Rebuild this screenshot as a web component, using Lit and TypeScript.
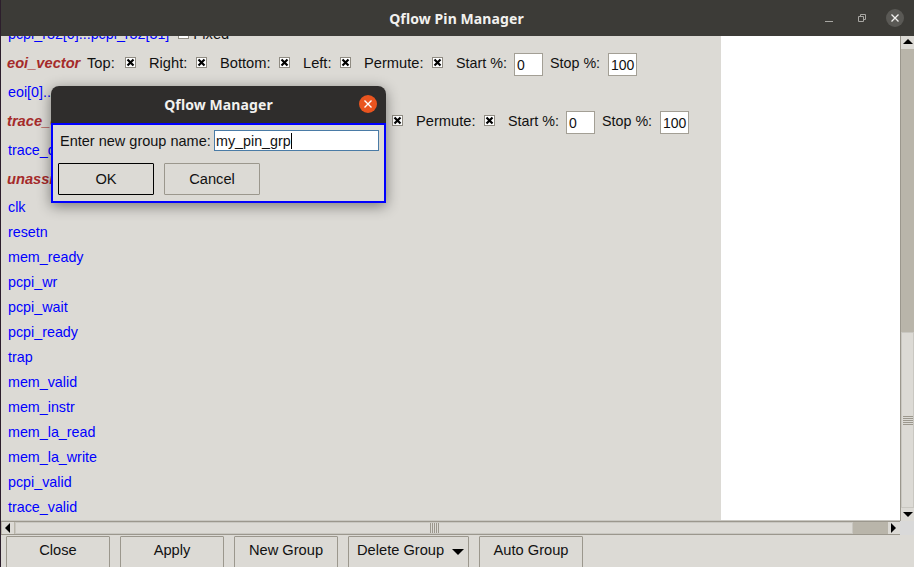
import { LitElement, css, html } from "lit";
import { customElement } from "lit/decorators.js";

const pins = [
  "clk", "resetn", "mem_ready", "pcpi_wr", "pcpi_wait", "pcpi_ready", "trap",
  "mem_valid", "mem_instr", "mem_la_read", "mem_la_write", "pcpi_valid", "trace_valid",
];

// label cell widths, the checkbox always follows directly
const sides: [string, number][] = [
  ["Top:", 38],
  ["Right:", 47],
  ["Bottom:", 59],
  ["Left:", 37],
  ["Permute:", 68],
];

@customElement("app-root")
export class AppRoot extends LitElement {
  static styles = css`
    :host {
      display: block;
      position: relative;
      width: 914px;
      height: 567px;
      overflow: hidden;
      background: #dcdad5;
      font-family: "Liberation Sans", Arial, sans-serif;
      font-size: 14.67px;
      color: #111;
    }
    .window {
      display: flex;
      flex-direction: column;
      height: 567px;
      border-left: 1px solid #2c1e2c;
      box-sizing: border-box;
    }
    .titlebar {
      flex: 0 0 36px;
      display: flex;
      align-items: center;
      justify-content: center;
      position: relative;
      background: #3c3b37;
      color: #f2f1ef;
      font-family: "Noto Sans", sans-serif;
      font-weight: 700;
      font-size: 14px;
      letter-spacing: 0.1px;
      padding-right: 2px;
    }
    .controls {
      position: absolute;
      right: 1px;
      top: 0;
      height: 35px;
      display: flex;
      align-items: center;
    }
    .ctl {
      width: 33px;
      height: 18px;
      display: flex;
      align-items: center;
      justify-content: center;
    }
    .ctl.close {
      width: 18px;
      border-radius: 50%;
      background: #5a5955;
      margin: 0 9px 0 8px;
    }
    .body {
      flex: none;
      display: grid;
      grid-template-columns: 1fr 14px;
      grid-template-rows: 485px 14px;
    }
    .view {
      display: flex;
      overflow: hidden;
      border-bottom: 1px solid #c9c7c1;
    }
    .panel {
      width: 720px;
      flex: none;
      overflow: hidden;
    }
    .canvas {
      flex: 1;
      background: #fff;
    }
    .scroll-content {
      margin-top: -17px;
      padding-left: 6px;
    }
    .row {
      display: flex;
      align-items: center;
      height: 29px;
      white-space: nowrap;
    }
    .row.short {
      height: 25px;
    }
    .row.gap {
      margin-bottom: 1px;
    }
    .name {
      font-weight: 700;
      font-style: italic;
      color: #a52a2a;
      flex: none;
    }
    .pin {
      color: #0000ff;
      margin-left: 1px;
      font-size: 14.3px;
    }
    .label {
      flex: none;
    }
    .pct {
      font-size: 14.3px;
      width: 58px;
    }
    .check {
      width: 11px;
      height: 11px;
      box-sizing: border-box;
      border: 1px solid #8f8b82;
      background: #fff;
      margin-right: 13px;
      flex: none;
      display: block;
    }
    .check.empty {
      margin: 0 4px 0 9px;
    }
    .entry {
      box-sizing: border-box;
      width: 29px;
      height: 23px;
      margin-top: 3px;
      padding: 3px 0 0 2px;
      background: #fff;
      border: 1px solid #a39f95;
      margin-right: 7px;
      flex: none;
      font-size: 14px;
    }
    .vbar {
      display: flex;
      flex-direction: column;
      border-left: 1px solid #9b978d;
      background: #b9b5aa;
      box-sizing: border-box;
    }
    .arrow {
      flex: none;
      height: 13px;
      background: #dcdad5;
      display: flex;
      align-items: center;
      justify-content: center;
    }
    .arrow.h {
      width: 12px;
      height: auto;
    }
    .trough {
      flex: 1;
      display: flex;
      min-height: 0;
      min-width: 0;
    }
    .trough.v {
      flex-direction: column;
      padding-top: 283px;
    }
    .thumb {
      background: #dcdad5;
      flex: 1;
      display: flex;
      align-items: center;
      justify-content: center;
      border: 1px solid #c9c7c1;
      box-sizing: border-box;
    }
    .grip-v {
      width: 10px;
      height: 9px;
      background: repeating-linear-gradient(#9b978d 0 1px, transparent 1px 2px);
    }
    .grip-h {
      width: 9px;
      height: 10px;
      background: repeating-linear-gradient(90deg, #9b978d 0 1px, transparent 1px 2px);
    }
    .hbar {
      display: flex;
      border-top: 1px solid #9b978d;
      border-bottom: 1px solid #9b978d;
      background: #b9b5aa;
      box-sizing: border-box;
      padding-left: 1px;
    }
    .hthumb {
      flex: none;
      width: 838px;
      margin-left: 1px;
    }
    .corner {
      background: #d9d9d9;
    }
    .buttons {
      flex: 1;
      display: flex;
      padding: 1px 0 0 5px;
      gap: 10px;
    }
    .buttons .btn {
      padding-bottom: 6px;
    }
    .btn {
      box-sizing: border-box;
      height: 33px;
      width: 104px;
      display: flex;
      align-items: center;
      justify-content: center;
      background: #dcdad5;
      border: 1px solid #9b978d;
      border-radius: 1px;
    }
    .buttons .btn.menu {
      width: 121px;
      gap: 8px;
      justify-content: flex-start;
      padding-left: 8px;
    }
    .menu svg {
      margin-top: 4px;
    }
    .dialog {
      position: absolute;
      left: 51px;
      top: 86px;
      width: 335px;
      height: 117px;
      display: flex;
      flex-direction: column;
      border-radius: 8px 8px 0 0;
      box-shadow: 0 3px 14px rgba(0, 0, 0, 0.45);
    }
    .dialog-title {
      flex: 0 0 37px;
      display: flex;
      align-items: center;
      justify-content: center;
      position: relative;
      background: #2f2d2c;
      border-radius: 8px 8px 0 0;
      color: #f2f1ef;
      font-family: "Noto Sans", sans-serif;
      font-weight: 700;
      font-size: 14px;
      letter-spacing: 0.1px;
    }
    .dialog-close {
      position: absolute;
      left: 308px;
      top: 9px;
      width: 18px;
      height: 18px;
      border-radius: 50%;
      background: #e9541f;
      display: flex;
      align-items: center;
      justify-content: center;
    }
    .dialog-body {
      flex: 1;
      display: flex;
      flex-direction: column;
      gap: 11px;
      border: 2px solid #0000ff;
      padding: 5px 5px 6px;
      background: #dcdad5;
      min-height: 0;
    }
    .field {
      display: flex;
      align-items: center;
      justify-content: space-between;
      padding-left: 2px;
      white-space: nowrap;
      font-size: 14.5px;
    }
    .field-input {
      box-sizing: border-box;
      width: 165px;
      height: 21px;
      padding-left: 1px;
      display: flex;
      align-items: center;
      background: #fff;
      border: 1px solid #4a7ba6;
      flex: none;
      font-size: 14.3px;
    }
    .caret {
      width: 1px;
      height: 16px;
      background: #000;
    }
    .dialog-buttons {
      display: flex;
      gap: 10px;
      margin-top: 1px;
    }
    .dialog-buttons .btn {
      width: 96px;
      height: 32px;
    }
    .btn.default {
      border-color: #000;
    }
  `;

  private check() {
    return html`<svg class="check" viewBox="0 0 9 9">
      <path d="M1.5 1.5 7.5 7.5M7.5 1.5 1.5 7.5" stroke="#000" stroke-width="2.2" fill="none" />
    </svg>`;
  }

  private vectorRow(name: string, nameWidth: number) {
    return html`<div class="row">
      <span class="name" style="width:${nameWidth}px">${name}</span>
      ${sides.map(
        ([label, width]) => html`<span class="label" style="width:${width}px">${label}</span>${this.check()}`,
      )}
      <span class="label pct">Start %:</span><span class="entry">0</span>
      <span class="label pct">Stop %:</span><span class="entry">100</span>
    </div>`;
  }

  private tri(dir: "up" | "down" | "left" | "right") {
    const d = {
      up: "M0 6 5 1 10 6Z",
      down: "M0 2 10 2 5 7Z",
      left: "M7 0V10L2 5Z",
      right: "M2 0V10L7 5Z",
    }[dir];
    return html`<svg width="10" height="10" viewBox="0 0 10 10"><path d=${d} fill="#000" /></svg>`;
  }

  render() {
    return html`
      <div class="window">
        <div class="titlebar">
          Qflow Pin Manager
          <div class="controls">
            <div class="ctl">
              <svg width="10" height="10" viewBox="0 0 10 10"><path d="M1 8.5H9" stroke="#a8a7a3" /></svg>
            </div>
            <div class="ctl">
              <svg width="10" height="10" viewBox="0 0 10 10" fill="none" stroke="#a8a7a3">
                <path d="M1.5 3.5H6.500V8.500H1.500ZM3.500 3.500V1.500H8.500V6.500H6.500" />
              </svg>
            </div>
            <div class="ctl close">
              <svg width="10" height="10" viewBox="0 0 10 10">
                <path d="M1.500 1.500 8.500 8.500M8.500 1.500 1.500 8.500" stroke="#f2f1ef" stroke-width="1.300" />
              </svg>
            </div>
          </div>
        </div>
        <div class="body">
          <div class="view">
            <div class="panel">
              <div class="scroll-content">
                <div class="row">
                  <span class="pin">pcpi_r32[0]...pcpi_r32[31]</span>
                  <span class="check empty"></span>
                  <span>Fixed</span>
                </div>
                ${this.vectorRow("eoi_vector", 80)}
                <div class="row"><span class="pin">eoi[0]...eoi[31]</span></div>
                ${this.vectorRow("trace_data_vector", 132)}
                <div class="row"><span class="pin">trace_data[0]...trace_data[35]</span></div>
                <div class="row gap"><span class="name">unassigned</span></div>
                ${pins.map((p) => html`<div class="row short"><span class="pin">${p}</span></div>`)}
              </div>
            </div>
            <div class="canvas"></div>
          </div>
          <div class="vbar">
            <div class="arrow">${this.tri("up")}</div>
            <div class="trough v">
              <div class="thumb"><div class="grip-v"></div></div>
            </div>
            <div class="arrow">${this.tri("down")}</div>
          </div>
          <div class="hbar">
            <div class="arrow h">${this.tri("left")}</div>
            <div class="thumb hthumb"><div class="grip-h"></div></div>
            <div class="trough"></div>
            <div class="arrow h">${this.tri("right")}</div>
          </div>
          <div class="corner"></div>
        </div>
        <div class="buttons">
          <div class="btn">Close</div>
          <div class="btn">Apply</div>
          <div class="btn">New Group</div>
          <div class="btn menu">
            Delete Group
            <svg width="12" height="6" viewBox="0 0 12 6"><path d="M0 0H12L6 6Z" fill="#000" /></svg>
          </div>
          <div class="btn">Auto Group</div>
        </div>
      </div>
      <div class="dialog">
        <div class="dialog-title">
          Qflow Manager
          <div class="dialog-close">
            <svg width="10" height="10" viewBox="0 0 10 10">
              <path d="M1.500 1.500 8.500 8.500M8.500 1.500 1.500 8.500" stroke="#fff" stroke-width="1.400" />
            </svg>
          </div>
        </div>
        <div class="dialog-body">
          <div class="field">
            <span>Enter new group name:</span>
            <div class="field-input">my_pin_grp<span class="caret"></span></div>
          </div>
          <div class="dialog-buttons">
            <div class="btn default">OK</div>
            <div class="btn">Cancel</div>
          </div>
        </div>
      </div>
    `;
  }
}
